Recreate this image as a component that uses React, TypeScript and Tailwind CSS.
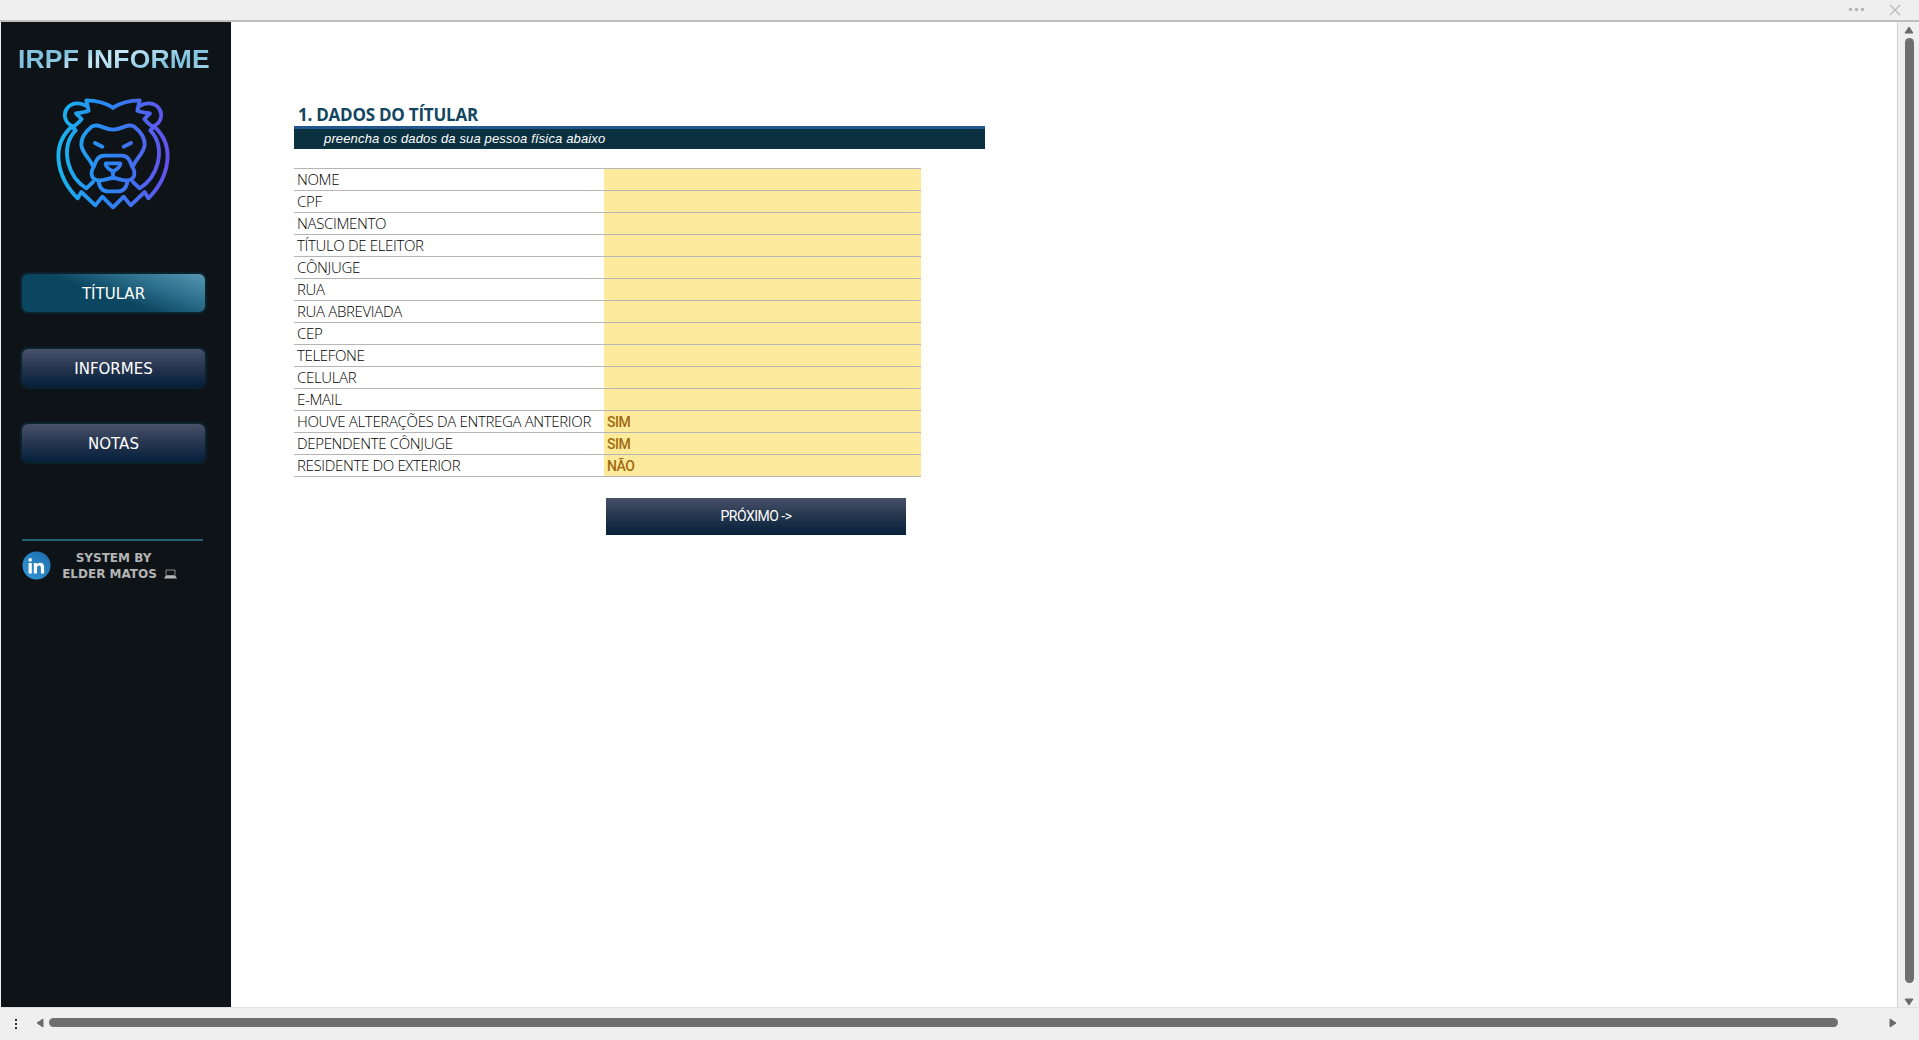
const labels: [string, string][] = [
  ["NOME", ""],
  ["CPF", ""],
  ["NASCIMENTO", ""],
  ["TÍTULO DE ELEITOR", ""],
  ["CÔNJUGE", ""],
  ["RUA", ""],
  ["RUA ABREVIADA", ""],
  ["CEP", ""],
  ["TELEFONE", ""],
  ["CELULAR", ""],
  ["E-MAIL", ""],
  ["HOUVE ALTERAÇÕES DA ENTREGA ANTERIOR", "SIM"],
  ["DEPENDENTE CÔNJUGE", "SIM"],
  ["RESIDENTE DO EXTERIOR", "NÃO"],
];

function Lion() {
  return (
    <svg viewBox="0 0 375 375" className="ml-[49px] mt-[13px] h-[125px] w-[125px]" fill="none" stroke="url(#lion)" strokeWidth="11.5" strokeLinecap="round" strokeLinejoin="round">
      <defs>
        <linearGradient id="lion" gradientUnits="userSpaceOnUse" x1="20" y1="190" x2="358" y2="190">
          <stop offset="0" stopColor="#18b6ee" />
          <stop offset="0.45" stopColor="#2c86f4" />
          <stop offset="1" stopColor="#6450ee" />
        </linearGradient>
      </defs>
      <path d="M189 53C166 38 138 31 109 31L116 62C106 66 91 68 78 70L95 87L85 98L68 113" />
      <path d="M189 53C212 38 240 31 269 31L262 62C272 66 287 68 300 70L283 87L293 98L310 113" />
      <path d="M107 47C91 36 65 38 52 54C38 73 44 98 67 108" />
      <path d="M271 47C287 36 313 38 326 54C340 73 334 98 311 108" />
      <path d="M67 108C32 139 22 176 26 213C31 257 54 296 83 325L94 306L136 346L157 320L189 352L221 320L242 346L284 306L295 325C324 296 347 257 352 213C356 176 346 139 311 108" />
      <path d="M66 110L77 121C50 149 47 186 55 220C64 254 84 280 109 295L129 276" />
      <path d="M312 110L301 121C328 149 331 186 323 220C314 254 294 280 269 295L249 276" />
      <path d="M127 225C119 205 96 190 94 164C93 140 111 121 125 110C145 97 160 119 189 119C218 119 233 97 253 110C267 121 285 140 284 164C282 190 259 205 251 225" />
      <path d="M189 197H163C143 197 137 214 132 229C117 253 127 270 146 271C164 272 175 264 189 264C203 264 214 272 232 271C251 270 261 253 246 229C241 214 235 197 215 197Z" />
      <path d="M189 263V245M167 220H211C213 232 197 239 189 245C181 239 165 232 167 220Z" />
      <path d="M146 272C147 293 158 304 174 304H204C220 304 231 293 232 272M135 159L157 170M243 159L221 170" />
    </svg>
  );
}

function NavButton({ text, active }: { text: string; active?: boolean }) {
  return (
    <button
      className={
        "flex h-[38px] w-[183px] items-center justify-center rounded-[6px] pt-[2px] text-[15px] text-white shadow-[0_0_2px_2px_#0d2430] " +
        (active
          ? "bg-[linear-gradient(20deg,#0b4660_0%,#0b4660_45%,#2b6e8b_70%,#5797b2_100%)]"
          : "bg-[linear-gradient(180deg,#48516a_0%,#26354f_50%,#04203a_100%)]")
      }
    >
      {text}
    </button>
  );
}

function Sidebar() {
  return (
    <aside className="ml-px flex h-[985px] w-[230px] flex-col bg-[#0d1317] font-['DejaVu_Sans',sans-serif]">
      <h1 className="ml-[17px] mt-[20px] h-[35px] whitespace-nowrap bg-[linear-gradient(160deg,#8cc8e2_0%,#7fc0dd_25%,#c8e8f5_42%,#7fc1df_70%,#bfe2f2_100%)] bg-clip-text font-['Liberation_Sans',Arial,sans-serif] text-[26.5px] font-bold leading-[34px] tracking-[0.16px] text-transparent">
        IRPF INFORME
      </h1>
      <Lion />
      <nav className="ml-[21px] mt-[59px] flex flex-col gap-[37px]">
        <NavButton text="TÍTULAR" active />
        <NavButton text="INFORMES" />
        <NavButton text="NOTAS" />
      </nav>
      <div className="ml-[21px] mt-[77px] h-[2px] w-[181px] bg-[#276075]" />
      <div className="ml-[21px] mt-[9px] flex">
        <svg viewBox="0 0 29 29" className="mt-[1px] h-[29px] w-[29px]">
          <defs>
            <linearGradient id="in" x1="0" y1="1" x2="1" y2="0">
              <stop offset="0" stopColor="#3399d8" />
              <stop offset="1" stopColor="#1d6cab" />
            </linearGradient>
          </defs>
          <circle cx="14.5" cy="14.5" r="14" fill="url(#in)" />
          <circle cx="8.2" cy="8.9" r="1.8" fill="#fff" />
          <path d="M6.600 12h3.200v10.500h-3.200zM11.800 12h3.100v1.400c.7-1.100 1.800-1.700 3.200-1.700 2.800 0 4 1.800 4 4.700v6.100h-3.200v-5.600c0-1.500-.6-2.400-1.700-2.400-1.400 0-2.200 1-2.200 2.600v5.400h-3.200z" fill="#fff" />
        </svg>
        <div className="ml-[11px] flex w-[116px] flex-col items-center whitespace-nowrap text-[12px] font-bold leading-[16px] text-[#b5b5b5]">
          <span className="mr-[13px]">SYSTEM BY</span>
          <span className="mr-px flex items-center gap-[7px]">
            ELDER MATOS
            <svg viewBox="0 0 13 10" className="h-[10px] w-[13px]">
              <path d="M2 1h9v5.500H2z" fill="none" stroke="#909090" />
              <path d="M1.500 7h10l1.500 2.500H0z" fill="#b5b5b5" />
            </svg>
          </span>
        </div>
      </div>
    </aside>
  );
}

export default function App() {
  return (
    <div className="flex h-[1040px] w-[1919px] flex-col overflow-hidden bg-[#efefef]">
      <header className="flex h-[22px] items-start justify-end border-b-2 border-[#bfbfbf]">
        <svg viewBox="0 0 56 20" className="mr-[16px] h-[20px] w-[56px]">
          <g fill="#b3b3b3">
            <circle cx="3.5" cy="9.5" r="1.7" />
            <circle cx="9.5" cy="9.5" r="1.7" />
            <circle cx="15.5" cy="9.5" r="1.7" />
          </g>
          <path d="M43 5l10 10M53 5l-10 10" stroke="#b8b8b8" strokeWidth="1.2" />
        </svg>
      </header>
      <div className="flex h-[985px]">
        <Sidebar />
        <main className="flex h-[985px] w-[1667px] flex-col border-r border-[#d0d0d0] bg-white pl-[63px]">
          <h2 className="mt-[80px] h-[24px] whitespace-nowrap pl-[4px] font-['Open_Sans',sans-serif] text-[17px] font-bold leading-[26px] tracking-[-0.24px] text-[#12465f]">
            1. DADOS DO TÍTULAR
          </h2>
          <div className="h-[23px] w-[691px] whitespace-nowrap border-t-[3px] border-[#23588f] bg-[#0b303f] pl-[30px] font-['Liberation_Sans',Arial,sans-serif] text-[13px] italic leading-[20px] tracking-[0.15px] text-white">
            preencha os dados da sua pessoa física abaixo
          </div>
          <div className="mt-[19px] w-[627px] border-t border-[#b5b5b5]">
            {labels.map(([label, value]) => (
              <div key={label} className="flex h-[22px] border-b border-[#b5b5b5]">
                <div className="w-[310px] whitespace-nowrap pl-[3px] font-['Open_Sans',sans-serif] text-[15px] font-light leading-[21px] tracking-[-0.34px] text-black">
                  {label}
                </div>
                <div className="w-[317px] bg-[#feea9c] pl-[3px] font-['Roboto',sans-serif] text-[14px] font-medium leading-[22px] tracking-[-0.5px] text-[#a06a10]">
                  {value}
                </div>
              </div>
            ))}
          </div>
          <button className="ml-[312px] mt-[21px] h-[37px] w-[300px] bg-[linear-gradient(180deg,#48516a_0%,#26384f_45%,#07203a_100%)] font-['Roboto',sans-serif] text-[14px] font-normal tracking-[-0.5px] text-white">
            PRÓXIMO -&gt;
          </button>
        </main>
        <div className="flex w-[21px] flex-col items-center pl-px pt-[4px]">
          <svg viewBox="0 0 10 8" className="h-[8px] w-[10px]"><path d="M5 1L9 7H1z" fill="#6a6a6a" stroke="#6a6a6a" strokeLinejoin="round" /></svg>
          <div className="mt-[4px] h-[945px] w-[9px] rounded-full bg-[#6f6f6f]" />
          <svg viewBox="0 0 10 8" className="mt-[15px] h-[8px] w-[10px]"><path d="M5 7L9 1H1z" fill="#6a6a6a" stroke="#6a6a6a" strokeLinejoin="round" /></svg>
        </div>
      </div>
      <footer className="flex h-[33px] items-center border-t border-[#e0e0e0] pb-[3px]">
        <svg viewBox="0 0 4 12" className="ml-[14px] mt-[2px] h-[12px] w-[4px]" fill="#333"><path d="M1 1h2v2H1zM1 5h2v2H1zM1 9h2v2H1z" /></svg>
        <svg viewBox="0 0 8 10" className="ml-[18px] h-[10px] w-[8px]"><path d="M1 5L7 1V9z" fill="#6a6a6a" stroke="#6a6a6a" strokeLinejoin="round" /></svg>
        <div className="ml-[5px] h-[9px] w-[1789px] rounded-full bg-[#6f6f6f]" />
        <svg viewBox="0 0 8 10" className="ml-[51px] h-[10px] w-[8px]"><path d="M7 5L1 1V9z" fill="#6a6a6a" stroke="#6a6a6a" strokeLinejoin="round" /></svg>
      </footer>
    </div>
  );
}
